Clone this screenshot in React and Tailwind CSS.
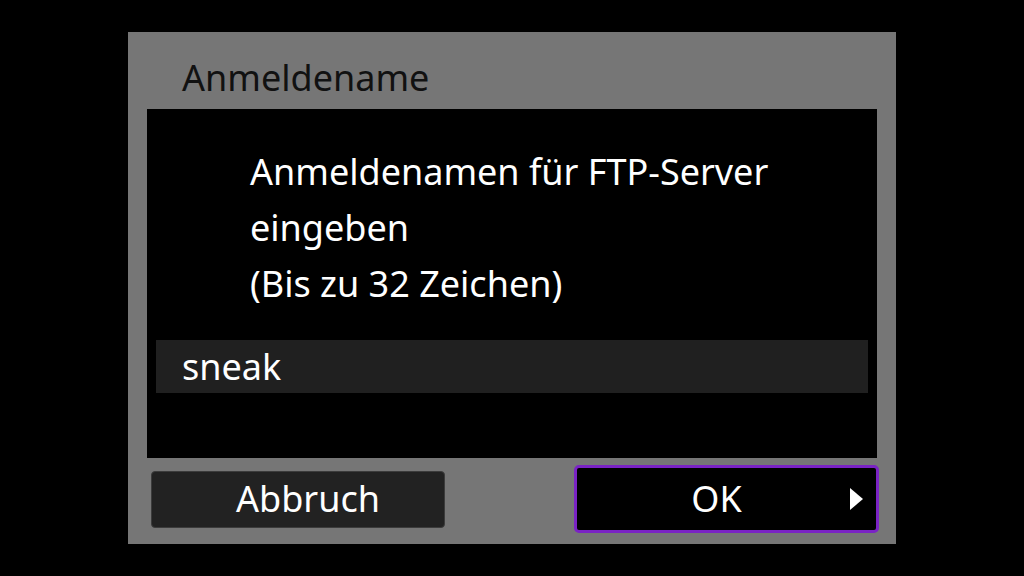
export default function App() {
    return (
        <div className="w-[1024px] h-[576px] bg-black flex items-center justify-center"
             style={{fontFamily: '"Noto Sans", "Open Sans", sans-serif'}}>
            <div className="w-[768px] h-[512px] bg-[#767676] flex flex-col">
                <div className="h-[77px] pl-[54px] pt-[26px] text-[36px] leading-[40px] text-[#111]">
                    Anmeldename
                </div>
                <div className="mx-[19px] h-[349px] bg-black flex flex-col px-[9px]">
                    <div className="pl-[94px] pt-[35px] text-white text-[36px] leading-[56px]">
                        <p>Anmeldenamen für FTP-Server</p>
                        <p>eingeben</p>
                        <p>(Bis zu 32 Zeichen)</p>
                    </div>
                    <div className="mt-[28px] h-[53px] bg-[#202020] pl-[26px] flex items-center text-white text-[36px]">
                        sneak
                    </div>
                </div>
                <div className="flex items-center justify-between pl-[23px] pr-[17px] pt-[7px]">
                    <button
                        className="w-[294px] h-[57px] bg-[#222] border border-[#3c3c3c] rounded-[4px] text-white text-[36px] pl-[20px]">
                        Abbruch
                    </button>
                    <button
                        className="relative w-[305px] h-[68px] bg-black border-[3px] border-[#7a23c4] rounded-[5px] text-white text-[36px] pr-[20px]">
                        OK
                        <svg className="absolute right-[13px] top-[20px]" width="13" height="22" viewBox="0 0 13 22">
                            <path d="M0 0 L13 11 L0 22 Z" fill="white"/>
                        </svg>
                    </button>
                </div>
            </div>
        </div>
    );
}
